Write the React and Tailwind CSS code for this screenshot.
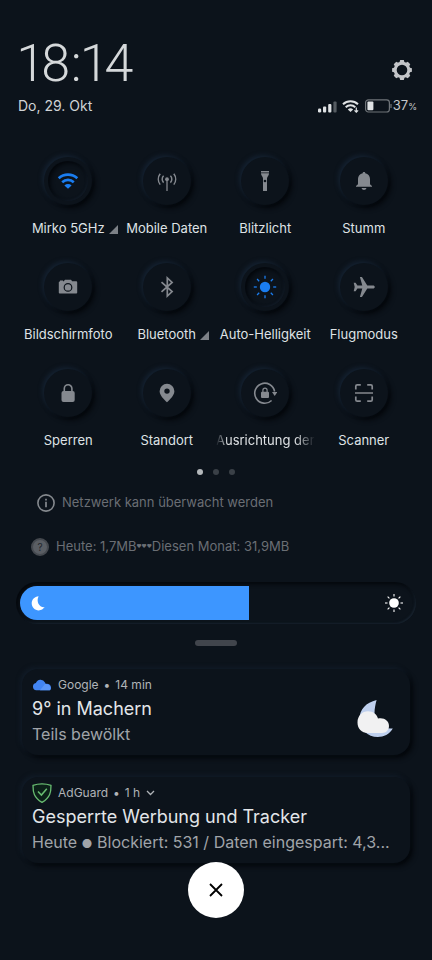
import React, { useState } from 'react';

const TEETH = [0, 45, 90, 135, 180, 225, 270, 315];

const GearIcon = () => (
  <svg width="20" height="20" viewBox="0 0 20 20" fill="none" stroke="currentColor">
    <circle cx="10" cy="10" r="6.8" strokeWidth="3" />
    {TEETH.map((a) => (
      <path key={a} d="M7.4 2.8 8.2.1h3.600l.8 2.700z" fill="currentColor" stroke="none" transform={`rotate(${a} 10 10)`} />
    ))}
  </svg>
);

const SignalIcon = () => (
  <svg width="19" height="13" viewBox="0 0 19 13" fill="currentColor">
    <rect x="0" y="8.5" width="3.2" height="4" rx="1.3" />
    <rect x="5" y="6.5" width="3.2" height="6" rx="1" />
    <rect x="10.2" y="4" width="3.2" height="8.5" rx="1" />
    <rect x="15.4" y="1.5" width="3.2" height="11" rx="1" opacity=".35" />
  </svg>
);

const StatusWifiIcon = () => (
  <svg width="18" height="14" viewBox="0 0 18 14" fill="none" stroke="currentColor" strokeWidth="2">
    <path d="M1 5.3a11 11 0 0 1 15 0" />
    <path d="M3.7 8.2a7 7 0 0 1 9.6 0" />
    <path d="M8.5 13 5.8 10.4a4 4 0 0 1 5.4 0z" fill="currentColor" stroke="none" />
    <path d="M14.3 8.6v4.6M12.5 11.4l1.8 1.8 1.8-1.8" strokeWidth="1.2" />
  </svg>
);

const BatteryIcon = () => (
  <svg width="27" height="14" viewBox="0 0 27 14" fill="none">
    <rect x=".6" y=".8" width="23.8" height="12.2" rx="2.8" stroke="#6f7479" strokeWidth="1.2" />
    <rect x="2.4" y="2.6" width="6" height="8.6" rx="1" fill="#dfe2e4" />
    <path d="M26 5v4" stroke="#6f7479" strokeWidth="1.2" />
  </svg>
);

const WifiIcon = () => (
  <svg width="24" height="24" viewBox="0 0 24 24" fill="none" stroke="currentColor" strokeWidth="2.6">
    <path d="M2.7 9.3a13.6 13.6 0 0 1 18.6 0" />
    <path d="M6.2 13.2a8.5 8.5 0 0 1 11.6 0" />
    <path d="M12 19.8 8.4 16.4a5.2 5.2 0 0 1 7.2 0z" fill="currentColor" stroke="none" />
  </svg>
);

const AntennaIcon = () => (
  <svg width="24" height="24" viewBox="0 0 24 24" fill="none" stroke="currentColor" strokeWidth="1.5">
    <path d="M12 11v11" strokeWidth="1.3" />
    <circle cx="12" cy="10.2" r="1.9" fill="currentColor" stroke="none" />
    <path d="M8.6 13.6a4.8 4.8 0 0 1 0-6.8M15.4 13.6a4.8 4.8 0 0 0 0-6.8" />
    <path d="M5.2 15.6a8.8 8.8 0 0 1 0-10.8M18.8 15.6a8.8 8.8 0 0 0 0-10.8" />
  </svg>
);

const FlashlightIcon = () => (
  <svg width="24" height="24" viewBox="0 0 24 24" fill="currentColor">
    <path d="M8 2h8v1.5H8z" />
    <path d="M8 4.3h8c0 2.6-2 3.2-2 5.2V22h-4V9.5c0-2-2-2.6-2-5.2z" />
    <circle cx="12" cy="12" r="1.3" fill="#0c131b" />
  </svg>
);

const BellIcon = () => (
  <svg width="24" height="24" viewBox="0 0 24 24" fill="currentColor">
    <path d="M12 3c.8 0 1.3.5 1.3 1.2 2.9.6 4.7 2.9 4.7 5.8v4.5c0 1 .6 1.6 2 2.5v.8H4V17c1.4-.9 2-1.5 2-2.500V10c0-2.900 1.800-5.200 4.700-5.800C10.700 3.500 11.200 3 12 3z" />
    <path d="M9.5 19h5c-.4 1.300-1.300 2-2.500 2s-2.100-.7-2.500-2z" />
  </svg>
);

const CameraIcon = () => (
  <svg width="24" height="24" viewBox="0 0 24 24" fill="currentColor">
    <path d="M4 6.6V5.4h3v.9h.8L9 4.8h6l1.2 1.500H20c.7 0 1.200.5 1.200 1.200v9.900c0 .7-.5 1.200-1.200 1.200H4c-.7 0-1.200-.5-1.200-1.200V7.500c0-.5.5-.9 1.200-.9z" />
    <circle cx="12" cy="12.4" r="3.8" fill="none" stroke="#0c131b" strokeWidth="1.2" />
  </svg>
);

const BluetoothIcon = () => (
  <svg width="24" height="24" viewBox="0 0 24 24" fill="none" stroke="currentColor" strokeWidth="1.7">
    <path d="m6.500 7.200 10.600 9.300L12.300 21V3l4.800 4.500-10.600 9.300" />
  </svg>
);

const SunIcon = ({ size = 24, core = 5.2, reach = 11.2 }) => (
  <svg width={size} height={size} viewBox="0 0 24 24" stroke="currentColor" strokeWidth="1.3">
    <circle cx="12" cy="12" r={core} fill="currentColor" stroke="none" />
    {TEETH.map((a) => (
      <path key={a} d={`M12 ${12 - reach}v3`} transform={`rotate(${a} 12 12)`} />
    ))}
  </svg>
);

const PlaneIcon = () => (
  <svg width="24" height="24" viewBox="0 0 24 24" fill="currentColor">
    <path d="M22.800 12c0 .9-.8 1.500-1.800 1.500h-5.700l-5.200 8.200c-.2.300-.5.400-.8.400H7.900l2.400-8.600H5.400l-1.800 2.700H1.700L2.700 12l-1-4.200h1.900l1.800 2.700h4.900L7.900 1.900h1.400c.3 0 .6.100.8.400l5.200 8.200H21c1 0 1.800.6 1.800 1.500z" />
  </svg>
);

const LockIcon = () => (
  <svg width="24" height="24" viewBox="0 0 24 24" fill="currentColor">
    <rect x="5.500" y="10" width="13.200" height="11" rx="2" />
    <path d="M8.300 11V7.600a3.800 3.800 0 0 1 7.600 0V11" fill="none" stroke="currentColor" strokeWidth="1.600" />
  </svg>
);

const PinIcon = () => (
  <svg width="24" height="24" viewBox="0 0 24 24" fill="currentColor" fillRule="evenodd">
    <path d="M12 2.800a7.400 7.400 0 0 0-7.400 7.400c0 4.900 7.400 11 7.400 11s7.400-6.100 7.400-11A7.400 7.400 0 0 0 12 2.800zm0 4.600a2.700 2.700 0 1 1 0 5.400 2.700 2.700 0 0 1 0-5.400z" />
  </svg>
);

const RotationLockIcon = () => (
  <svg width="24" height="24" viewBox="0 0 24 24" fill="none" stroke="currentColor" strokeWidth="1.600">
    <path d="M18.600 19.500A10 10 0 1 1 21.600 10.500" />
    <path d="m19 11h5.400l-2.700 4z" fill="currentColor" stroke="none" />
    <rect x="8" y="10.800" width="8" height="6.200" rx="1" fill="currentColor" stroke="none" />
    <path d="M9.900 11V9.300a2.100 2.100 0 0 1 4.200 0V11" strokeWidth="1.200" />
  </svg>
);

const ScannerIcon = () => (
  <svg width="24" height="24" viewBox="0 0 24 24" fill="none" stroke="currentColor" strokeWidth="1.700">
    <path d="M3.800 8.500V5.300c0-.9.500-1.400 1.400-1.400h3.600M15.200 3.900h3.600c.9 0 1.400.5 1.400 1.400v3.200M20.200 15.500v3.200c0 .9-.5 1.400-1.400 1.400h-3.600M8.800 20.100H5.200c-.9 0-1.400-.5-1.400-1.400v-3.200M3 12h18" />
  </svg>
);

const InfoIcon = () => (
  <svg width="18" height="18" viewBox="0 0 18 18" fill="none" stroke="currentColor" strokeWidth="1.600">
    <circle cx="9" cy="9" r="8.100" />
    <path d="M9 7.800v5.400M9 4.700v1.700" strokeWidth="1.700" />
  </svg>
);

const MoonIcon = () => (
  <svg width="16" height="16" viewBox="0 0 16 16" fill="currentColor">
    <path d="M8.600 1.200C4.500 1.500 1.700 4.700 1.700 8.300c0 4 3.100 7.100 7 7.100 2.500 0 4.700-1.300 5.900-3.300-5 .8-8.800-5.500-6-10.900z" />
  </svg>
);

const CloudIcon = () => (
  <svg width="20" height="12" viewBox="0 0 20 12" fill="#4285f4">
    <path d="M4.300 11.300a3.700 3.700 0 0 1-.4-7.300A5 5 0 0 1 13 3.400c.3.500.6 1 .8 1.500 3-.4 5.200 1.300 5.200 3.600 0 .9-.1 2-1 2.800z" />
    <path d="M13 4.900c2.500-.2 5.500 1.400 5.500 4.200 0 .9-.2 1.600-.8 2.200H8z" fill="#5a96f8" />
  </svg>
);

const ShieldIcon = () => (
  <svg width="20" height="20" viewBox="0 0 20 20" fill="#0b2018" stroke="#68bc71" strokeWidth="1.300">
    <path d="M10 .9c3 0 6.200.5 9 1.500 0 6.500-.6 12-9 17-8.400-5-9-10.500-9-17C3.800 1.400 7 .9 10 .9z" />
    <path d="m6 8.600 3.400 3.500 5.400-6.300" fill="none" strokeWidth="1.500" />
  </svg>
);

const WeatherIcon = () => (
  <svg width="38" height="40" viewBox="0 0 38 40">
    <path d="M20.600 1C10 3.500 3.500 10.500 3.500 20c0 10.500 8.300 18 18.300 18 6 0 11.700-2.800 15-8.500-10 1-18.300-5-18.300-15 0-5 1-9.500 2.100-13.500z" fill="#bfd0ee" />
    <path d="M12 34C5.500 34 1.500 29.500 1.500 23.500 1.500 17 6.200 12.300 12 12.300c4.800 0 8.800 2.800 10 7.200 5.900-1.300 11 2 11 7.500 0 4.200-3 7-7 7z" fill="#f1f1f2" />
  </svg>
);

const TILES = [
  { label: 'Mirko 5GHz', icon: WifiIcon, on: true, expandable: true },
  { label: 'Mobile Daten', icon: AntennaIcon },
  { label: 'Blitzlicht', icon: FlashlightIcon },
  { label: 'Stumm', icon: BellIcon },
  { label: 'Bildschirmfoto', icon: CameraIcon },
  { label: 'Bluetooth', icon: BluetoothIcon, expandable: true },
  { label: 'Auto-Helligkeit', icon: SunIcon, on: true },
  { label: 'Flugmodus', icon: PlaneIcon },
  { label: 'Sperren', icon: LockIcon },
  { label: 'Standort', icon: PinIcon },
  { label: 'Ausrichtung der', icon: RotationLockIcon, scrolling: true },
  { label: 'Scanner', icon: ScannerIcon },
];

const Tile = ({ label, icon: Icon, on, expandable, scrolling }) => {
  const [active, setActive] = useState(Boolean(on));

  return (
    <button
      type="button"
      aria-pressed={active}
      onClick={() => setActive(!active)}
      className="flex min-w-0 flex-col items-center gap-[13px]"
    >
      <span className="flex size-12 items-center justify-center rounded-full bg-[#0c131b] shadow-[-2px_-2px_4px_#142130,3px_3px_5px_#04070b]">
        <span
          className={`flex size-10 items-center justify-center rounded-full ${
            active
              ? 'text-[#1a7df0] shadow-[inset_2px_2px_4px_#03060a,inset_-1px_-1px_2px_#121c28]'
              : 'text-[#85898f]'
          }`}
        >
          <Icon />
        </span>
      </span>
      <span
        className={`relative flex h-5 justify-center whitespace-nowrap text-[13px] leading-5 text-[#dfe2e5] ${
          scrolling
            ? '[mask-image:linear-gradient(to_right,transparent,black_12%,black_80%,transparent)]'
            : ''
        }`}
      >
        {label}
        {expandable && (
          <svg className="absolute left-full bottom-1 ml-1" width="9" height="9" viewBox="0 0 9 9" fill="#7d8187">
            <path d="M9 0v9H0z" />
          </svg>
        )}
      </span>
    </button>
  );
};

const BrightnessSlider = () => {
  const [value, setValue] = useState(58.5);

  return (
    <div className="relative mx-4 mt-[25px] h-[42px] rounded-full p-1 shadow-[inset_2px_2px_4px_#03060a,inset_-1px_-1px_2px_#1a2633]">
      <div className="flex h-full overflow-hidden rounded-full">
        <div className="h-full bg-[#3d96ff]" style={{ width: `${value}%` }} />
      </div>
      <div className="pointer-events-none absolute inset-0 flex items-center justify-between pl-[14px] pr-3 text-white">
        <MoonIcon />
        <SunIcon size={20} core={5.8} reach={10.8} />
      </div>
      <input
        type="range"
        min="0"
        max="100"
        step="0.5"
        value={value}
        aria-label="Helligkeit"
        onChange={(e) => setValue(Number(e.target.value))}
        className="absolute inset-0 h-full w-full cursor-pointer opacity-0"
      />
    </div>
  );
};

const Notification = ({ icon, app, age, title, body, children }) => (
  <article className="flex items-center justify-between rounded-2xl bg-[#0c131b] px-[10px] pb-2 pt-[6px] shadow-[-2px_-2px_4px_#111b27,3px_3px_5px_#04070b]">
    <div className="min-w-0">
      <div className="flex h-5 items-center gap-[6px] text-xs text-[#b0b4b8]">
        <span className="flex w-5 justify-center">{icon}</span>
        <span className="flex gap-[5px]">
          <span>{app}</span>
          <span>•</span>
          <span>{age}</span>
        </span>
        {!children && (
          <svg width="9" height="6" viewBox="0 0 9 6" fill="none" stroke="currentColor" strokeWidth="1.3">
            <path d="m1 1 3.5 3.500L8 1" />
          </svg>
        )}
      </div>
      <h2 className="mt-px h-[26px] truncate text-lg leading-[26px] text-[#e3e6e9]">{title}</h2>
      <p className="h-[25px] truncate text-base leading-[25px] text-[#a0a4a9]">{body}</p>
    </div>
    {children}
  </article>
);

const App = () => (
  <div className="min-h-screen bg-[#0c131b] pt-9 font-['Inter',sans-serif]">
    {/* Header */}
    <header className="flex items-end justify-between pl-[18px] pr-[15px]">
      <div>
        <h1 className="font-['Roboto',sans-serif] text-[52px] font-light leading-[56px] text-[#d5d8da] proportional-nums">18:14</h1>
        <p className="mt-1 text-sm leading-5 text-[#d0d3d6]">Do, 29. Okt</p>
      </div>
      <div className="flex flex-col items-end gap-4">
        <button type="button" aria-label="Einstellungen" className="mr-[5px] text-[#c3c5c8]">
          <GearIcon />
        </button>
        <div className="flex h-5 items-center text-[#dfe2e4]">
          <SignalIcon />
          <span className="ml-[5px]">
            <StatusWifiIcon />
          </span>
          <span className="ml-[5px]">
            <BatteryIcon />
          </span>
          <span className="ml-px text-[13px] leading-5 text-[#c3c6c9]">
            37<span className="text-[9px]">%</span>
          </span>
        </div>
      </div>
    </header>

    {/* Tiles */}
    <section className="mt-[41px] grid grid-cols-4 gap-y-[25px] px-[19px]">
      {TILES.map((tile) => (
        <Tile key={tile.label} {...tile} />
      ))}
    </section>

    <div className="mt-[19px] flex justify-center gap-[10px]">
      <span className="size-[6px] rounded-full bg-[#b4b8bb]" />
      <span className="size-[6px] rounded-full bg-[#3a4047]" />
      <span className="size-[6px] rounded-full bg-[#3a4047]" />
    </div>

    <div className="mt-[18px] flex h-5 items-center gap-[7px] pl-[37px] text-[13px] text-[#6a6e74]">
      <span className="text-[#85898e]">
        <InfoIcon />
      </span>
      Netzwerk kann überwacht werden
    </div>
    <div className="mt-6 flex h-5 items-center gap-[7px] pl-[31px] text-[13px] text-[#6a6e74]">
      <span className="flex size-[18px] items-center justify-center rounded-full border-2 border-[#45494f] bg-[#5a5e64] text-[10px] text-[#22272e]">?</span>
      <span className="flex items-center">
        Heute: 1,7MB<span className="text-[5px]">♥♥♥</span>Diesen Monat: 31,9MB
      </span>
    </div>

    <BrightnessSlider />
    <div className="mx-auto mt-4 h-[6px] w-[42px] rounded-full bg-[#41454c]" />

    {/* Notifications */}
    <section className="mt-[23px] flex flex-col gap-[22px] px-[22px]">
      <Notification icon={<CloudIcon />} app="Google" age="14 min" title="9° in Machern" body="Teils bewölkt">
        <span className="mr-[6px] mt-4">
          <WeatherIcon />
        </span>
      </Notification>
      <Notification
        icon={<ShieldIcon />}
        app="AdGuard"
        age="1 h"
        title="Gesperrte Werbung und Tracker"
        body={
          <>
            Heute <span className="text-xs">●</span> Blockiert: 531 / Daten eingespart: 4,3...
          </>
        }
      />
    </section>

    <button
      type="button"
      aria-label="Alle Benachrichtigungen löschen"
      className="relative mx-auto -mt-px flex size-14 items-center justify-center rounded-full bg-white text-black"
    >
      <svg width="14" height="14" viewBox="0 0 14 14" fill="none" stroke="currentColor" strokeWidth="1.8">
        <path d="m1 1 12 12M13 1 1 13" />
      </svg>
    </button>
  </div>
);

export default App;
